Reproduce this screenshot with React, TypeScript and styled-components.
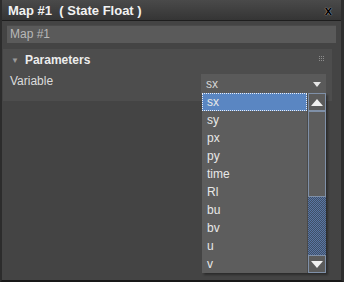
import React from 'react';
import styled, { createGlobalStyle } from 'styled-components';

const GlobalStyle = createGlobalStyle`
  html, body {
    margin: 0;
    padding: 0;
    background: #3a3a3a;
  }
  * { box-sizing: border-box; }
`;

const Window = styled.div`
  position: relative;
  width: 344px;
  height: 282px;
  background: #444444;
  border-left: 2px solid #2c2c2c;
  border-right: 3px solid #2e2e2e;
  border-bottom: 2px solid #181818;
  display: flex;
  flex-direction: column;
  font-family: "Liberation Sans", Arial, sans-serif;
  overflow: hidden;
`;

const TitleBar = styled.div`
  height: 21px;
  flex: none;
  display: flex;
  align-items: center;
  justify-content: space-between;
  padding: 0 9px 0 6px;
  background: linear-gradient(#4a4a4a, #353535);
  border-bottom: 1px solid #1e1e1e;
  color: #f2f2f2;
  font-weight: bold;
  font-size: 13px;
  white-space: pre;
`;

const Close = styled.span`
  color: #000;
  font-size: 13px;
  font-weight: bold;
  text-shadow: 0 0 1px #aaa, 0 0 1px #aaa;
  margin-top: 1px;
`;

const NameField = styled.div`
  margin: 4px 5px 0 5px;
  height: 18px;
  background: #5a5a5a;
  border-top: 1px solid #4a4a4a;
  color: #b8b8b8;
  font-size: 12px;
  line-height: 17px;
  padding-left: 3px;
`;

const Panel = styled.div`
  margin: 6px 9px 0 1px;
  height: 52px;
  background: #4d4d4d;
  display: flex;
  flex-direction: column;
`;

const PanelHeader = styled.div`
  height: 22px;
  display: flex;
  align-items: center;
  padding: 0 8px 0 8px;
  color: #ececec;
  font-weight: bold;
  font-size: 12px;
  gap: 6px;
`;

const Caret = styled.span`
  font-size: 8px;
  color: #9a9a9a;
`;

const Grip = styled.svg`
  margin-left: auto;
  margin-top: -4px;
`;

const Row = styled.div`
  display: flex;
  align-items: flex-start;
  justify-content: space-between;
  padding: 3px 6px 0 7px;
`;

const Label = styled.span`
  color: #dcdcdc;
  font-size: 12px;
  line-height: 14px;
`;

const Select = styled.div`
  width: 125px;
  height: 20px;
  background: #5a5a5a;
  display: flex;
  align-items: center;
  justify-content: space-between;
  padding: 0 5px 0 5px;
  color: #d6d6d6;
  font-size: 12px;
`;

const SmallArrow = styled.span`
  width: 0;
  height: 0;
  border-left: 4px solid transparent;
  border-right: 4px solid transparent;
  border-top: 5px solid #e6e6e6;
`;

const Dropdown = styled.div`
  position: absolute;
  left: 200px;
  top: 93px;
  width: 124px;
  height: 180px;
  background: #5d5d5d;
  display: flex;
  box-shadow: 2px 2px 2px rgba(0, 0, 0, 0.35);
`;

const List = styled.div`
  flex: 1;
  display: flex;
  flex-direction: column;
`;

const Item = styled.div<{ $active?: boolean }>`
  height: 18px;
  line-height: 18px;
  padding-left: 5px;
  font-size: 12px;
  color: #e8e8e8;
  background: ${({ $active }) => ($active ? '#5a86c2' : 'transparent')};
  outline: ${({ $active }) => ($active ? '1px dotted #e8eef8' : 'none')};
  outline-offset: -1px;
`;

const ScrollBar = styled.div`
  width: 19px;
  display: flex;
  flex-direction: column;
  border-left: 1px solid #4a4a4a;
`;

const ScrollButton = styled.div`
  height: 18px;
  background: #5b5b5b;
  border: 1px solid #7f90a8;
  display: flex;
  align-items: center;
  justify-content: center;
`;

const Thumb = styled.div`
  height: 86px;
  background: #5d5d5d;
  border: 1px solid #7f90a8;
`;

const Track = styled.div`
  flex: 1;
  background-color: #4d6282;
  background-image: repeating-conic-gradient(#5a76a4 0 25%, #3f4f66 0 50%);
  background-size: 2px 2px;
`;

const Tri = styled.span<{ $up?: boolean }>`
  width: 0;
  height: 0;
  border-left: 6px solid transparent;
  border-right: 6px solid transparent;
  ${({ $up }) => ($up ? 'border-bottom: 7px solid #f0f0f0;' : 'border-top: 7px solid #f0f0f0;')}
`;

const items = ['sx', 'sy', 'px', 'py', 'time', 'Rl', 'bu', 'bv', 'u', 'v'];

export default function App() {
  return (
    <>
      <GlobalStyle />
      <Window>
        <TitleBar>
          <span>Map #1  ( State Float )</span>
          <Close>x</Close>
        </TitleBar>
        <NameField>Map #1</NameField>
        <Panel>
          <PanelHeader>
            <Caret>▼</Caret>
            <span>Parameters</span>
            <Grip width="5" height="5" viewBox="0 0 5 5">
              {[0, 2, 4].map((y) =>
                [0, 2, 4].map((x) => (
                  <rect key={`${x}-${y}`} x={x} y={y} width="1" height="1" fill="#8c8c8c" />
                ))
              )}
            </Grip>
          </PanelHeader>
          <Row>
            <Label>Variable</Label>
            <Select>
              <span>sx</span>
              <SmallArrow />
            </Select>
          </Row>
        </Panel>
        <Dropdown>
          <List>
            {items.map((it, i) => (
              <Item key={it} $active={i === 0}>
                {it}
              </Item>
            ))}
          </List>
          <ScrollBar>
            <ScrollButton>
              <Tri $up />
            </ScrollButton>
            <Thumb />
            <Track />
            <ScrollButton>
              <Tri />
            </ScrollButton>
          </ScrollBar>
        </Dropdown>
      </Window>
    </>
  );
}
